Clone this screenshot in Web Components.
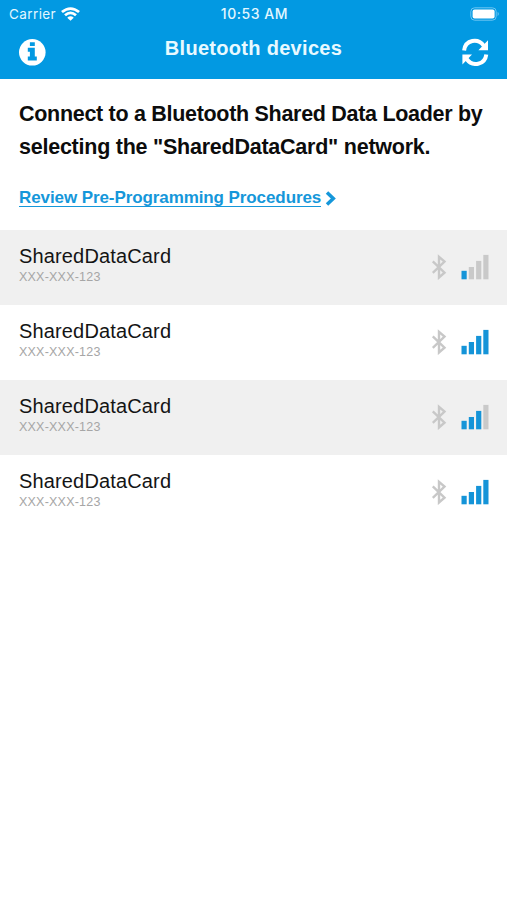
<!DOCTYPE html>
<html lang="en">
<head>
<meta charset="utf-8">
<title>Bluetooth devices</title>
<style>
html, body { margin: 0; background: #fff; }
body { font-family: "Liberation Sans", Arial, sans-serif; color: #0c0c0c; }
</style>
</head>
<body>
<device-screen></device-screen>
<script>
const define = (name, html, setup) => customElements.define(name, class extends HTMLElement {
  connectedCallback() {
    if (this.shadowRoot) return;
    this.attachShadow({ mode: "open" }).innerHTML = html;
    if (setup) setup(this, this.shadowRoot);
  }
});

define("status-bar", `
<style>
:host { display: grid; grid-template-columns: 1fr auto 1fr; align-items: center; height: 28px; box-sizing: border-box; padding: 0 7px 0 9px; font: 400 13.5px/16px Inter, sans-serif; color: #e3f7ff; }
.left { display: flex; align-items: center; gap: 5px; letter-spacing: .4px; }
.left svg { margin-top: -1px; }
.time { font-weight: 500; font-size: 14px; letter-spacing: .55px; }
.battery { justify-self: end; margin-top: -1px; }
svg { display: block; }
</style>
<div class="left"><span>Carrier</span>
<svg width="19" height="14" viewBox="0 0 18 14" preserveAspectRatio="none" fill="none" stroke="#fff" stroke-width="2.6"><path d="M.9 5.1Q9-2 17.1 5.1M3.8 8.3Q9 3.6 14.2 8.3"/><path d="M9 13.8 5.9 10.7Q9 8 12.1 10.7Z" fill="#fff" stroke="none"/></svg></div>
<span class="time">10:53 AM</span>
<svg class="battery" width="30" height="14" viewBox="0 0 30 14"><rect x=".8" y=".8" width="25.4" height="12.4" rx="3.8" fill="none" stroke="#6dc5f2"/><rect x="2.6" y="2.6" width="22" height="8.8" rx="2" fill="#fff"/><path d="M27.6 4.8q2.4 2.2 0 4.4z" fill="#6dc5f2"/></svg>`);

define("nav-bar", `
<style>
:host { display: grid; grid-template-columns: 28px 1fr 28px; align-items: start; height: 51px; box-sizing: border-box; padding: 10px 18px 0; color: #e8f9ff; }
h1 { margin: -2px 0 0; font-size: 20px; line-height: 24px; letter-spacing: .3px; text-align: center; }
svg { display: block; }
</style>
<svg width="28" height="28" viewBox="0 0 28 28"><circle cx="14.3" cy="14.3" r="13.3" fill="#fff"/><path fill="#0299e2" d="M11.9 4.3h4.9v3.7h-4.9zM9.8 9.8h7v8.7h2v3.9h-9v-3.9h2.1v-4.8H9.8z"/></svg>
<h1><slot></slot></h1>
<svg width="28" height="28" viewBox="0 0 28 28"><g fill="none" stroke="#fff" stroke-width="4"><path d="M3.1 12.4C4.5 1.6 17-.2 22.8 7.8"/><path d="M25.3 16.4C23.9 27.2 11.4 29 5.6 21"/></g><path fill="#fff" d="M27 2.2v10h-9.6zM1.4 26.6V16.6H11z"/></svg>`);

define("intro-text", `
<style>
:host { display: block; padding: 18px 19px 0; }
p { margin: 0; padding-top: 1px; font-weight: 700; font-size: 21.5px; line-height: 33px; letter-spacing: -.3px; white-space: nowrap; }
::slotted(span) { letter-spacing: -.24px; }
</style>
<p><slot></slot></p>`);

define("procedure-link", `
<style>
:host { display: flex; padding: 25px 19px 0; color: #1597da; gap: 4px; align-items: center; }
a { color: inherit; text-decoration: none; font-weight: 700; font-size: 17px; line-height: 17px; letter-spacing: -.09px; border-bottom: 1.5px solid currentColor; }
svg { display: block; }
</style>
<a><slot></slot></a><svg width="12" height="17" viewBox="0 0 12 17"><path d="m2 2.5 6.3 6-6.3 6" fill="none" stroke="currentColor" stroke-width="3.5"/></svg>`);

define("signal-bars", `
<style>:host { display: block; } svg { display: block; } rect { fill: #c9c9c9; } rect.on { fill: #1594d8; }</style>
<svg width="28" height="26" viewBox="0 0 28 26"><rect x=".5" y="16.8" width="5.2" height="8.5"/><rect x="7.8" y="13" width="5.2" height="12.3"/><rect x="15.1" y="6.9" width="5.2" height="18.4"/><rect x="22.3" y=".9" width="5.2" height="24.4"/></svg>`,
(host, root) => root.querySelectorAll("rect").forEach((r, i) => r.classList.toggle("on", i < +host.getAttribute("level"))));

define("device-row", `
<style>
:host { display: flex; justify-content: space-between; height: 75px; box-sizing: border-box; padding: 14px 18px 0 19px; background: #fff; }
:host([shaded]) { background: #f0f0f0; }
.name { font-size: 20px; line-height: 24px; letter-spacing: .15px; color: #141414; }
.id { font-size: 12.5px; line-height: 18px; letter-spacing: .22px; color: #a6a6a6; }
.icons { display: flex; gap: 14px; align-items: flex-start; padding-top: 10px; }
svg { display: block; }
</style>
<div><div class="name"><slot></slot></div><div class="id"></div></div>
<div class="icons"><svg width="16" height="26" viewBox="0 0 16 26"><path d="m1.8 7.4 11.7 11.3-5.5 4.8V2.9l5.5 4.6L1.8 18.8" fill="none" stroke="#c8c8c8" stroke-width="2.4"/></svg><signal-bars></signal-bars></div>`,
(host, root) => {
  root.querySelector(".id").textContent = host.getAttribute("serial");
  const bars = document.createElement("signal-bars");
  bars.setAttribute("level", host.getAttribute("level"));
  root.querySelector("signal-bars").replaceWith(bars);
});

define("device-screen", `
<style>
:host { display: block; min-height: 900px; background: #fff; }
header { background: #0299e2; height: 79px; }
main { display: flex; flex-direction: column; }
section { height: 150.6px; }
</style>
<header><status-bar></status-bar><nav-bar>Bluetooth devices</nav-bar></header>
<main>
<section><intro-text>Connect to a Bluetooth Shared Data Loader by<br><span>selecting the "SharedDataCard" network.</span></intro-text>
<procedure-link>Review Pre-Programming Procedures</procedure-link></section>
<device-row shaded serial="XXX-XXX-123" level="1">SharedDataCard</device-row>
<device-row serial="XXX-XXX-123" level="4">SharedDataCard</device-row>
<device-row shaded serial="XXX-XXX-123" level="3">SharedDataCard</device-row>
<device-row serial="XXX-XXX-123" level="4">SharedDataCard</device-row>
</main>`);
</script>
</body>
</html>
